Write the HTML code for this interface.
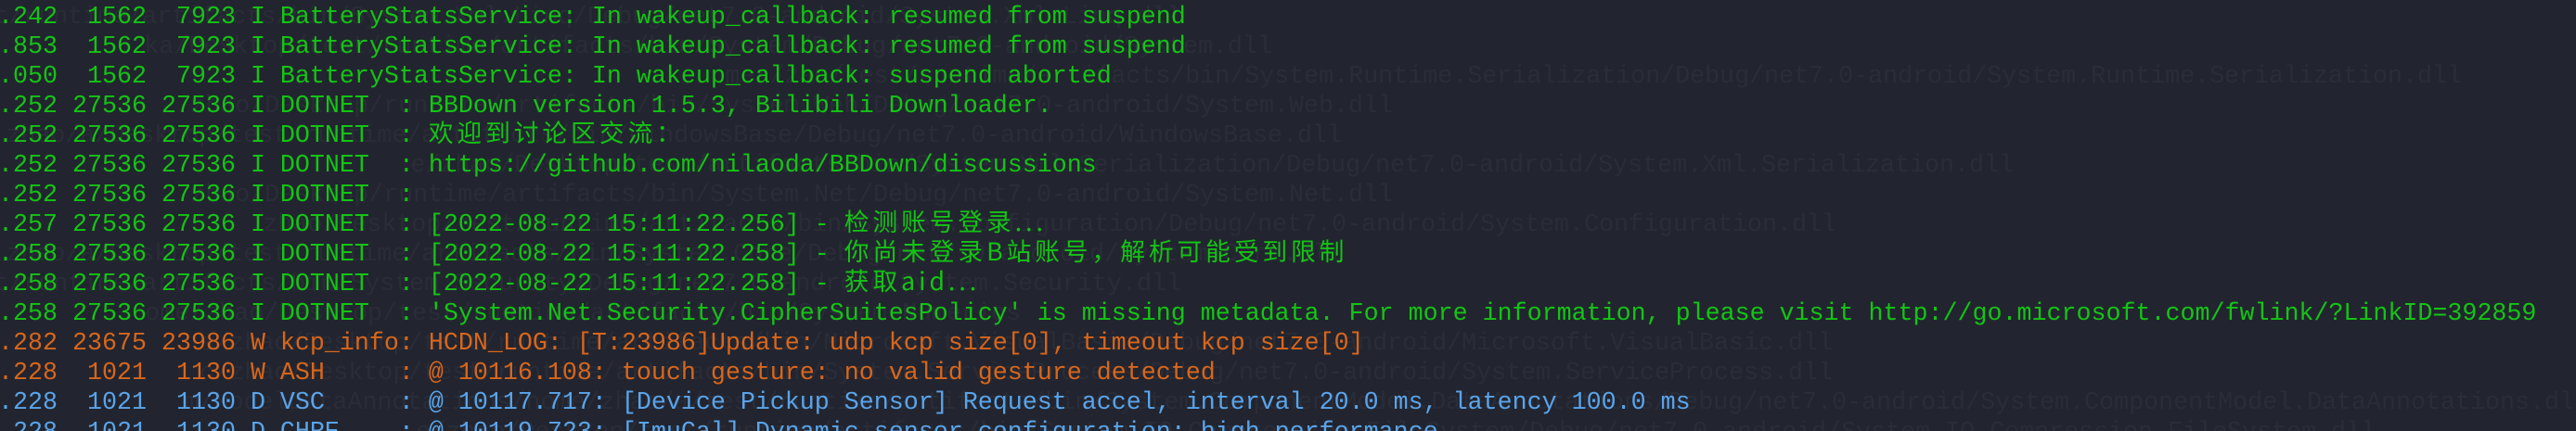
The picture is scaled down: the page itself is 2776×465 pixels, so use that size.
<!DOCTYPE html>
<html><head><meta charset="utf-8"><style>
html,body{margin:0;padding:0;background:#22252f;width:2776px;height:465px;overflow:hidden}
.wrap{position:relative;width:2776px;height:465px;font-family:"Liberation Mono","Noto Sans CJK SC",monospace;font-size:26.67px;}
.ln{position:absolute;left:-2px;height:32px;line-height:32px;white-space:pre}
.g{position:absolute;left:0;height:32px;line-height:32px;white-space:pre;color:#2a2d38;display:flex;justify-content:flex-end;overflow:hidden}
.gr{color:#14c414}.or{color:#d8661c}.bl{color:#5aa4ea}
.c{font-family:"Noto Sans CJK SC",sans-serif;letter-spacing:4px;line-height:0;vertical-align:baseline}
</style></head><body><div class="wrap">
<div class="g" style="top:3px;width:1273px"><span>ome/zhao/Desktop/test/runtime/artifacts/bin/System.Xml.Linq/Debug/net7.0-android/System.Xml.Linq.dll</span></div>
<div class="g" style="top:35px;width:1371px"><span>ka/Desktop/test/runtime/artifacts/bin/System/Debug/net7.0-android/System.dll</span></div>
<div class="g" style="top:67px;width:2653px"><span>mer/zao/test/runtime/artifacts/bin/System.Runtime.Serialization/Debug/net7.0-android/System.Runtime.Serialization.dll</span></div>
<div class="g" style="top:99px;width:1501px"><span>zhao/Desktop/runtime/artifacts/bin/System.Web/Debug/net7.0-android/System.Web.dll</span></div>
<div class="g" style="top:131px;width:1446px"><span>zhao/a/Desktop/test/runtime/artifacts/bin/WindowsBase/Debug/net7.0-android/WindowsBase.dll</span></div>
<div class="g" style="top:163px;width:2170px"><span>e/zhao/Desktop/test/artifacts/bin/System.Xml.Serialization/Debug/net7.0-android/System.Xml.Serialization.dll</span></div>
<div class="g" style="top:195px;width:1501px"><span>zhao/Desktop/runtime/artifacts/bin/System.Net/Debug/net7.0-android/System.Net.dll</span></div>
<div class="g" style="top:227px;width:1979px"><span>zhao/Desktop/test/runtime/artifacts/bin/System.Configuration/Debug/net7.0-android/System.Configuration.dll</span></div>
<div class="g" style="top:259px;width:1446px"><span>zhao/a/Desktop/test/runtime/artifacts/bin/System.Core/Debug/net7.0-android/System.Core.dll</span></div>
<div class="g" style="top:291px;width:1273px"><span>ome/zhao/Desktop/test/runtime/artifacts/bin/System.Security/Debug/net7.0-android/System.Security.dll</span></div>
<div class="g" style="top:323px;width:1100px"><span>ome/zhao/Desktop/test/runtime/artifacts/bin/System.Numerics</span></div>
<div class="g" style="top:355px;width:1975px"><span>s/zhao/Desktop/test/runtime/artifacts/bin/Microsoft.VisualBasic/Debug/net7.0-android/Microsoft.VisualBasic.dll</span></div>
<div class="g" style="top:387px;width:1975px"><span>c/zhao/Desktop/test/runtime/artifacts/bin/System.ServiceProcess/Debug/net7.0-android/System.ServiceProcess.dll</span></div>
<div class="g" style="top:419px;width:2790px"><span>m/ModelDataAnnotations/home/zhao/a/test/runtime/artifacts/bin/System.ComponentModel.DataAnnotations/Debug/net7.0-android/System.ComponentModel.DataAnnotations.dll</span></div>
<div class="g" style="top:451px;width:2560px"><span>e/zhao/Desktop/test/runtime/artifacts/bin/System.IO.Compression.FileSystem/Debug/net7.0-android/System.IO.Compression.FileSystem.dll</span></div>

<div class="ln gr" style="top:3px">.242  1562  7923 I BatteryStatsService: In wakeup_callback: resumed from suspend</div>
<div class="ln gr" style="top:35px">.853  1562  7923 I BatteryStatsService: In wakeup_callback: resumed from suspend</div>
<div class="ln gr" style="top:67px">.050  1562  7923 I BatteryStatsService: In wakeup_callback: suspend aborted</div>
<div class="ln gr" style="top:99px">.252 27536 27536 I DOTNET  : BBDown version 1.5.3, Bilibili Downloader.</div>
<div class="ln gr" style="top:131px">.252 27536 27536 I DOTNET  : <span class="c">欢迎到讨论区交流：</span></div>
<div class="ln gr" style="top:163px">.252 27536 27536 I DOTNET  : https://github.com/nilaoda/BBDown/discussions</div>
<div class="ln gr" style="top:195px">.252 27536 27536 I DOTNET  :</div>
<div class="ln gr" style="top:227px">.257 27536 27536 I DOTNET  : [2022-08-22 15:11:22.256] - <span class="c">检测账号登录...</span></div>
<div class="ln gr" style="top:259px">.258 27536 27536 I DOTNET  : [2022-08-22 15:11:22.258] - <span class="c">你尚未登录B站账号，解析可能受到限制</span></div>
<div class="ln gr" style="top:291px">.258 27536 27536 I DOTNET  : [2022-08-22 15:11:22.258] - <span class="c">获取aid...</span></div>
<div class="ln gr" style="top:323px">.258 27536 27536 I DOTNET  : 'System.Net.Security.CipherSuitesPolicy' is missing metadata. For more information, please visit http://go.microsoft.com/fwlink/?LinkID=392859</div>
<div class="ln or" style="top:355px">.282 23675 23986 W kcp_info: HCDN_LOG: [T:23986]Update: udp kcp size[0], timeout kcp size[0]</div>
<div class="ln or" style="top:387px">.228  1021  1130 W ASH     : @ 10116.108: touch gesture: no valid gesture detected</div>
<div class="ln bl" style="top:419px">.228  1021  1130 D VSC     : @ 10117.717: [Device Pickup Sensor] Request accel, interval 20.0 ms, latency 100.0 ms</div>
<div class="ln bl" style="top:451px">.228  1021  1130 D CHRE    : @ 10119.723: [ImuCal] Dynamic sensor configuration: high performance</div>
</div></body></html>
